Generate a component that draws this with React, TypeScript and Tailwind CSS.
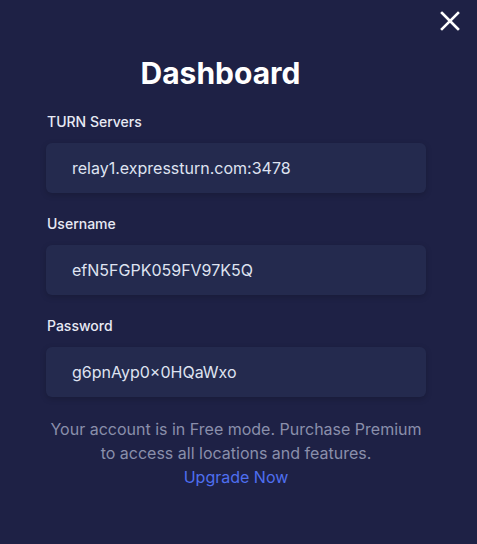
import React from "react";

function Field({ label, value }: { label: string; value: string }) {
  return (
    <div className="flex flex-col">
      <div className="text-[14px] leading-5 font-medium text-[#e8eaf4] pl-[1px]">{label}</div>
      <div className="mt-[11px] h-[50px] rounded-[6px] bg-[#242a4e] shadow-[0_2px_6px_rgba(0,0,0,0.18)] flex items-center pl-[26px] text-[16px] text-[#dfe3f1]">
        {value}
      </div>
    </div>
  );
}

export default function App() {
  return (
    <div
      className="relative w-[477px] h-[544px] bg-[#1e2145] overflow-hidden"
      style={{ fontFamily: "Inter, 'Noto Sans', sans-serif" }}
    >
      <button className="absolute right-[17px] top-[11px] w-[20px] h-[20px] text-white">
        <svg viewBox="0 0 20 20" width="20" height="20" fill="none" stroke="currentColor" strokeWidth="2.6" strokeLinecap="square">
          <path d="M2 2L18 18M18 2L2 18" />
        </svg>
      </button>
      <div className="flex flex-col pl-[46px] pr-[51px] pt-[55px]">
        <h1 className="text-[30px] leading-9 font-bold text-white text-center pr-[31px]">Dashboard</h1>
        <div className="mt-[21px] flex flex-col gap-[21px]">
          <Field label="TURN Servers" value="relay1.expressturn.com:3478" />
          <Field label="Username" value="efN5FGPK059FV97K5Q" />
          <Field label="Password" value="g6pnAyp0×0HQaWxo" />
        </div>
        <div className="mt-[20px] -mx-[4px] text-center text-[16px] leading-6 text-[#8a8fab]">
          <p>Your account is in Free mode. Purchase Premium to access all locations and features.</p>
          <a className="text-[#4f6ff0]" href="#">Upgrade Now</a>
        </div>
      </div>
    </div>
  );
}
